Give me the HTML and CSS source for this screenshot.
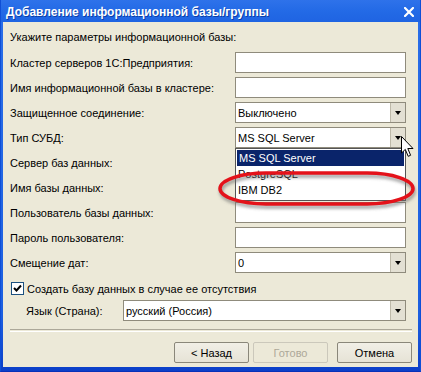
FILE: index.html
```html
<!DOCTYPE html>
<html lang="ru">
<head>
<meta charset="utf-8">
<title>Добавление информационной базы/группы</title>
<link rel="stylesheet" href="styles.css">
</head>
<body>
<div class="window">
  <div class="titlebar">
    <span class="title">Добавление информационной базы/группы</span>
    <span class="close">
      <svg width="10" height="10" viewBox="0 0 10 10"><path d="M1 1 L9 9 M9 1 L1 9" stroke="#fff" stroke-width="2.2" stroke-linecap="square"/></svg>
    </span>
  </div>
  <div class="content">
    <div class="heading">Укажите параметры информационной базы:</div>
    <div class="form">
      <div class="label">Кластер серверов 1С:Предприятия:</div>
      <div class="field"></div>
      <div class="label">Имя информационной базы в кластере:</div>
      <div class="field"></div>
      <div class="label">Защищенное соединение:</div>
      <div class="field combo"><span class="val">Выключено</span><span class="arrow"></span></div>
      <div class="label">Тип СУБД:</div>
      <div class="field combo open"><span class="val">MS SQL Server</span><span class="arrow"></span>
        <div class="list">
          <div class="item selected">MS SQL Server</div>
          <div class="item">PostgreSQL</div>
          <div class="item">IBM DB2</div>
        </div>
      </div>
      <div class="label">Сервер баз данных:</div>
      <div class="field"></div>
      <div class="label">Имя базы данных:</div>
      <div class="field"></div>
      <div class="label">Пользователь базы данных:</div>
      <div class="field"></div>
      <div class="label">Пароль пользователя:</div>
      <div class="field"></div>
      <div class="label">Смещение дат:</div>
      <div class="field combo"><span class="val">0</span><span class="arrow"></span></div>
    </div>
    <div class="check-row">
      <span class="checkbox">
        <svg width="9" height="9" viewBox="0 0 9 9"><path d="M1 4 L3.5 6.5 L8 1.5" fill="none" stroke="#000" stroke-width="2"/></svg>
      </span>
      <span>Создать базу данных в случае ее отсутствия</span>
    </div>
    <div class="lang-row">
      <div class="lang-label">Язык (Страна):</div>
      <div class="field combo wide"><span class="val">русский (Россия)</span><span class="arrow"></span></div>
    </div>
    <div class="separator"></div>
    <div class="buttons">
      <div class="btn">&lt; Назад</div>
      <div class="btn disabled">Готово</div>
      <div class="btn cancel">Отмена</div>
    </div>
  </div>
  <svg class="annotation" width="421" height="372" viewBox="0 0 421 372">
    <defs>
      <filter id="sh" x="-10%" y="-30%" width="120%" height="170%">
        <feGaussianBlur stdDeviation="1.6"/>
      </filter>
    </defs>
    <rect x="220" y="176" width="193" height="31" rx="46" ry="16" fill="none" stroke="#6b6b6b" stroke-opacity="0.55" stroke-width="4" filter="url(#sh)"/>
    <rect x="219" y="173" width="193" height="31" rx="46" ry="16" fill="none" stroke="#e4121a" stroke-width="3.5"/>
  </svg>
  <svg class="cursor" width="14" height="23" viewBox="0 0 14 23">
    <path d="M0.5 0.5 L0.5 17 L4.3 13.4 L7.2 20.3 L9.6 19.3 L6.8 12.5 L12 12.5 Z" fill="#fff" stroke="#000" stroke-width="1" stroke-linejoin="miter"/>
  </svg>
</div>
</body>
</html>
```
FILE: styles.css
```css
html, body {
  margin: 0;
  padding: 0;
  background: #ffffff;
}

.window {
  position: relative;
  width: 421px;
  height: 372px;
  box-sizing: border-box;
  background: linear-gradient(to bottom, #2a6ee8 0%, #1c5fe0 85%, #0c3fc8 100%);
  border-left: 1px solid #0f4fd6;
  border-right: 1px solid #0f4fd6;
  border-bottom: 1px solid #0831b8;
  display: flex;
  flex-direction: column;
  font-family: "Liberation Sans", Arial, sans-serif;
  font-size: 11px;
  color: #000;
  overflow: hidden;
}

.titlebar {
  height: 22px;
  display: flex;
  align-items: center;
  justify-content: space-between;
  padding: 0 7px 0 6px;
  background: linear-gradient(to bottom, #2e72ea 0%, #236ae6 50%, #1f64e2 100%);
  margin: 0 -1px;
}

.title {
  color: #fff;
  font-weight: bold;
  font-size: 12px;
  text-shadow: 1px 1px 0 #0c3fa8;
  padding-top: 1px;
}

.close {
  display: flex;
  margin-top: 1px;
}

.content {
  margin: 0 2px 4px 2px;
  flex: 1;
  background: #ece9d8;
  padding: 8px 12px 0 7px;
  display: flex;
  flex-direction: column;
}

.heading {
  line-height: 14px;
  height: 14px;
  margin-bottom: 8px;
}

.form {
  display: grid;
  grid-template-columns: 1fr 171px;
  grid-auto-rows: 21px;
  row-gap: 4px;
}

.label {
  display: flex;
  align-items: center;
  white-space: nowrap;
}

.field {
  position: relative;
  box-sizing: border-box;
  height: 21px;
  background: #fff;
  border: 1px solid #8f8b7c;
}

.combo {
  display: flex;
  align-items: center;
}

.combo .val {
  flex: 1;
  padding-left: 2px;
  white-space: nowrap;
}

.combo .arrow {
  align-self: stretch;
  width: 14px;
  background: #e3e0d3;
  border-left: 1px solid #bdb9a9;
  display: flex;
  align-items: center;
  justify-content: center;
}

.combo .arrow::after {
  content: "";
  width: 0;
  height: 0;
  border-left: 3.5px solid transparent;
  border-right: 3.5px solid transparent;
  border-top: 4px solid #000;
}

.list {
  position: absolute;
  left: -1px;
  right: -1px;
  top: 20px;
  z-index: 5;
  background: #fff;
  border: 1px solid #555;
  padding-top: 1px;
  height: 53px;
  box-sizing: border-box;
}

.item {
  height: 16px;
  line-height: 16px;
  padding-left: 2px;
  white-space: nowrap;
}

.item.selected {
  background: #0a246a;
  color: #fff;
  margin: 0 1px;
}

.check-row {
  margin-top: 9px;
  height: 13px;
  display: flex;
  align-items: center;
  gap: 3px;
  margin-left: 1px;
}

.checkbox {
  width: 13px;
  height: 13px;
  box-sizing: border-box;
  border: 1px solid #1c5180;
  background: #fff;
  display: flex;
  align-items: center;
  justify-content: center;
}

.lang-row {
  margin-top: 5px;
  display: flex;
  align-items: center;
  padding-left: 16px;
}

.lang-label {
  width: 97px;
  white-space: nowrap;
}

.field.wide {
  flex: 1;
}

.separator {
  margin-top: 8px;
  margin-right: -6px;
  height: 1px;
  border-top: 1px solid #aca899;
  border-bottom: 1px solid #fff;
}

.buttons {
  margin-top: 10px;
  margin-right: -6px;
  display: flex;
  justify-content: flex-end;
  gap: 4px;
}

.btn {
  width: 75px;
  height: 21px;
  box-sizing: border-box;
  border: 1px solid #8a877a;
  border-radius: 2px;
  background: linear-gradient(to bottom, #f1efe6, #e6e3d6);
  display: flex;
  align-items: center;
  justify-content: center;
}

.btn.disabled {
  color: #aca899;
  border-color: #cbc8bb;
  background: #ece9d8;
}

.btn.cancel {
  margin-left: 5px;
}

.annotation {
  position: absolute;
  left: 0;
  top: 0;
  pointer-events: none;
  z-index: 10;
}

.cursor {
  position: absolute;
  left: 400px;
  top: 136px;
  z-index: 11;
}
```
